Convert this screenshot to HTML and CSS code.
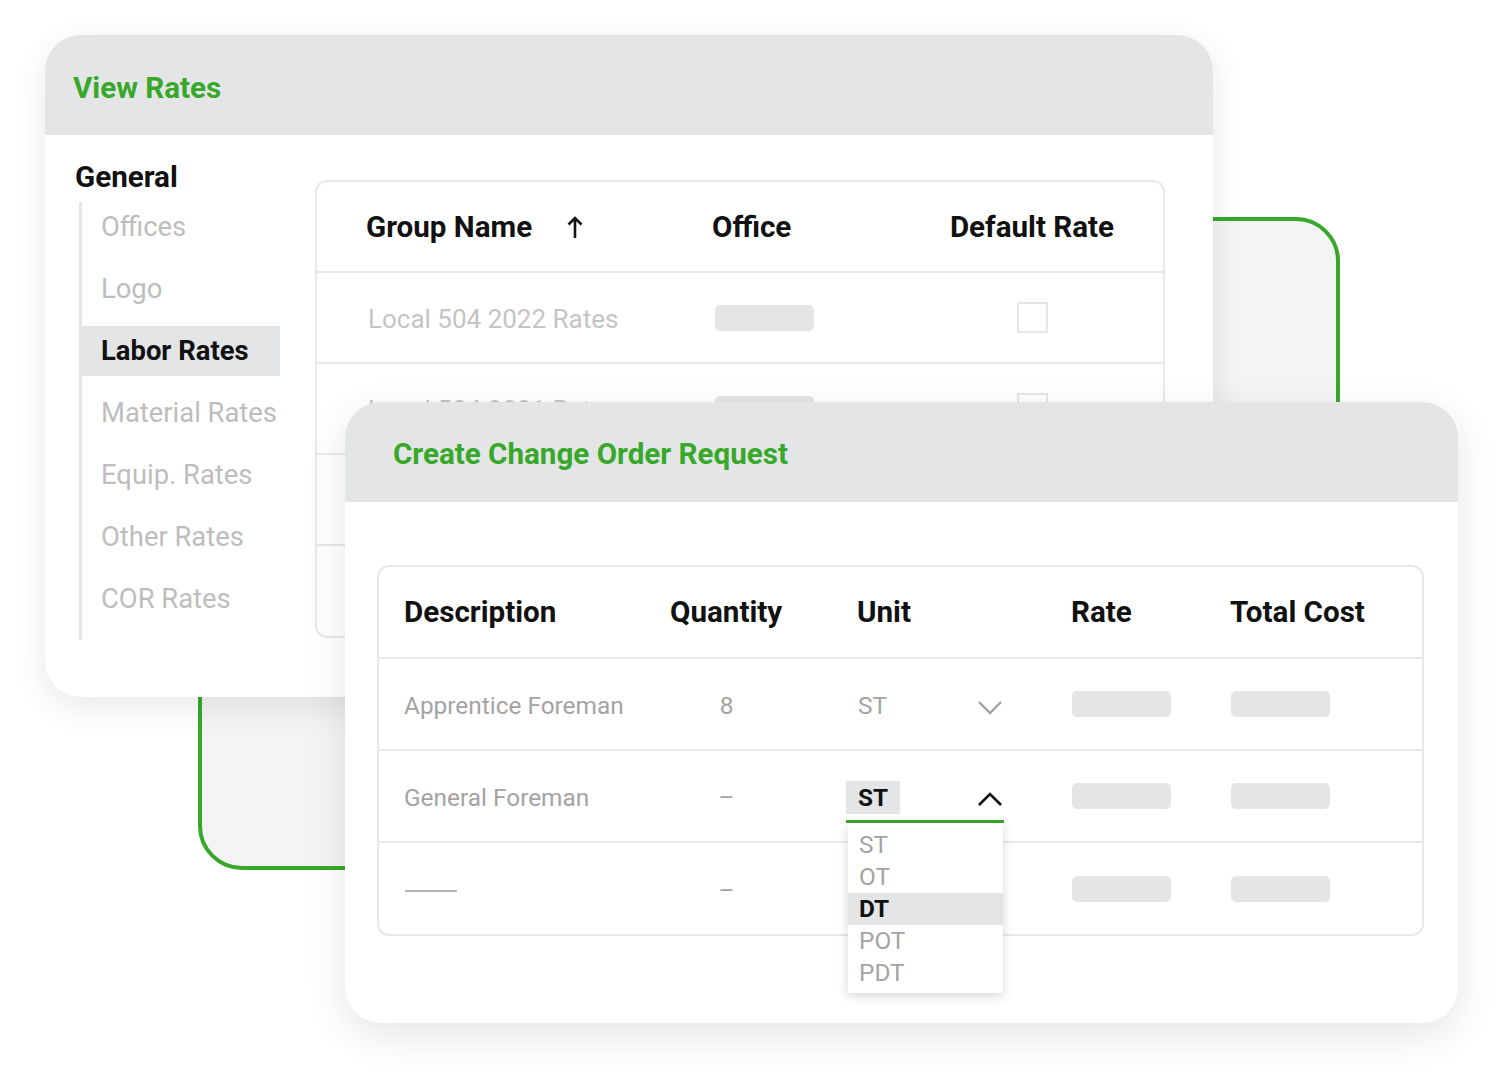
FILE: index.html
```html
<!DOCTYPE html>
<html>
<head>
<meta charset="utf-8">
<link rel="stylesheet" href="styles.css">
</head>
<body>
<div class="stage">
  <div class="connector"></div>

  <section class="card card-rates">
    <header class="card-head"><h1 class="card-title">View Rates</h1></header>
    <div class="rates-body">
      <nav class="sidebar">
        <h2 class="side-title">General</h2>
        <ul class="side-list">
          <li class="side-item">Offices</li>
          <li class="side-item">Logo</li>
          <li class="side-item active">Labor Rates</li>
          <li class="side-item">Material Rates</li>
          <li class="side-item">Equip. Rates</li>
          <li class="side-item">Other Rates</li>
          <li class="side-item">COR Rates</li>
        </ul>
      </nav>
      <div class="rtable">
        <div class="rrow rhead">
          <div class="rcell">Group Name
            <svg class="sort-arrow" viewBox="0 0 16 24" width="16" height="24"><path d="M8 23V3M1.5 9.5L8 3l6.5 6.5" fill="none" stroke="#111" stroke-width="2.6"/></svg>
          </div>
          <div class="rcell">Office</div>
          <div class="rcell center">Default Rate</div>
        </div>
        <div class="rrow">
          <div class="rcell muted">Local 504 2022 Rates</div>
          <div class="rcell"><span class="bar bar-office"></span></div>
          <div class="rcell center"><span class="check"></span></div>
        </div>
        <div class="rrow">
          <div class="rcell muted">Local 504 2021 Rates</div>
          <div class="rcell"><span class="bar bar-office"></span></div>
          <div class="rcell center"><span class="check"></span></div>
        </div>
        <div class="rrow">
          <div class="rcell"></div>
          <div class="rcell"><span class="bar bar-office"></span></div>
          <div class="rcell center"><span class="check"></span></div>
        </div>
        <div class="rrow last">
          <div class="rcell"></div>
          <div class="rcell"><span class="bar bar-office"></span></div>
          <div class="rcell center"><span class="check"></span></div>
        </div>
      </div>
    </div>
  </section>

  <section class="card card-cor">
    <header class="card-head cor-head"><h1 class="card-title">Create Change Order Request</h1></header>
    <div class="cor-body">
      <div class="ctable">
        <div class="crow chead">
          <div class="ccell">Description</div>
          <div class="ccell"><span class="qty">Quantity</span></div>
          <div class="ccell">Unit</div>
          <div class="ccell">Rate</div>
          <div class="ccell">Total Cost</div>
        </div>
        <div class="crow">
          <div class="ccell grey">Apprentice Foreman</div>
          <div class="ccell grey"><span class="qty">8</span></div>
          <div class="ccell">
            <div class="select">
              <span class="sel-label">ST</span>
              <svg class="chev" viewBox="0 0 26 15" width="26" height="15"><path d="M2 2l11 11L24 2" fill="none" stroke="#a2a2a2" stroke-width="2.4"/></svg>
            </div>
          </div>
          <div class="ccell"><span class="bar"></span></div>
          <div class="ccell"><span class="bar"></span></div>
        </div>
        <div class="crow">
          <div class="ccell grey">General Foreman</div>
          <div class="ccell grey"><span class="qty">–</span></div>
          <div class="ccell">
            <div class="select open">
              <span class="sel-label">ST</span>
              <svg class="chev" viewBox="0 0 26 15" width="26" height="15"><path d="M2 13L13 2l11 11" fill="none" stroke="#111" stroke-width="2.6"/></svg>
              <span class="sel-line"></span>
              <ul class="dropdown">
                <li class="opt">ST</li>
                <li class="opt">OT</li>
                <li class="opt active">DT</li>
                <li class="opt">POT</li>
                <li class="opt">PDT</li>
              </ul>
            </div>
          </div>
          <div class="ccell"><span class="bar"></span></div>
          <div class="ccell"><span class="bar"></span></div>
        </div>
        <div class="crow last">
          <div class="ccell"><span class="blank-line"></span></div>
          <div class="ccell grey"><span class="qty">–</span></div>
          <div class="ccell"></div>
          <div class="ccell"><span class="bar"></span></div>
          <div class="ccell"><span class="bar"></span></div>
        </div>
      </div>
    </div>
  </section>
</div>
</body>
</html>
```

FILE: styles.css
```css
* { box-sizing: border-box; }
html, body { margin: 0; padding: 0; background: #fff; }
body {
  font-family: Roboto, "Noto Sans", "Liberation Sans", sans-serif;
  color: #111;
  overflow: hidden;
}
ul { list-style: none; margin: 0; padding: 0; }
h1, h2 { margin: 0; }

.stage {
  position: relative;
  width: 1500px;
  height: 1076px;
}

.connector {
  position: absolute;
  left: 198px;
  top: 217px;
  width: 1142px;
  height: 653px;
  border: 4px solid #37a829;
  border-radius: 44px;
  background: #f4f4f4;
}

.card {
  position: absolute;
  background: #fff;
  border-radius: 36px;
  overflow: hidden;
  box-shadow: 0 10px 34px rgba(0, 0, 0, 0.09);
}
.card-rates { left: 45px; top: 35px; width: 1168px; height: 662px; }
.card-cor { left: 345px; top: 402px; width: 1113px; height: 621px; overflow: visible; box-shadow: 0 12px 40px rgba(0,0,0,0.10); }

.card-head {
  height: 100px;
  background: #e4e5e7;
  display: flex;
  align-items: center;
  padding-left: 28px;
}
.card-cor .card-head { border-radius: 36px 36px 0 0; padding-left: 48px; }
.card-title {
  font-size: 29.6px;
  font-weight: 700;
  color: #37a829;
  padding-top: 5px;
}
.card-cor .card-title { padding-top: 4px; }

/* ---- View Rates ---- */
.rates-body {
  display: flex;
  align-items: flex-start;
  padding: 0 48px 0 30px;
}
.sidebar {
  width: 240px;
  padding-top: 26px;
}
.side-title {
  font-size: 29.6px;
  font-weight: 700;
  line-height: 32px;
  color: #111;
}
.side-list {
  margin-top: 9px;
  margin-left: 4px;
  border-left: 3px solid #e6e6e6;
  padding-bottom: 16px;
  display: flex;
  flex-direction: column;
  gap: 12px;
}
.side-item {
  height: 50px;
  width: 198px;
  display: flex;
  align-items: center;
  padding-left: 19px;
  font-size: 27.4px;
  color: #bdbdbd;
  white-space: nowrap;
}
.side-item.active {
  background: #e4e5e7;
  color: #111;
  font-weight: 700;
}

.rtable {
  margin-top: 45px;
  width: 850px;
  height: 458px;
  border: 2px solid #e8e8e8;
  border-radius: 12px;
  overflow: hidden;
}
.rrow {
  display: grid;
  grid-template-columns: 346px 189px 1fr;
  padding-left: 49px;
  height: 91px;
  border-bottom: 2px solid #e8e8e8;
  align-items: center;
}
.rrow.last { border-bottom: none; }
.rhead .rcell {
  font-size: 29.6px;
  font-weight: 700;
  color: #111;
}
.rcell {
  display: flex;
  align-items: center;
  white-space: nowrap;
}
.rcell.center { justify-content: center; }
.rcell.muted {
  font-size: 26px;
  color: #c4c4c4;
  padding-left: 2px;
  padding-top: 2px;
}
.sort-arrow { margin-left: 35px; }
.bar {
  display: block;
  width: 99px;
  height: 26px;
  border-radius: 5px;
  background: #e4e5e7;
}
.bar-office { margin-left: 3px; margin-top: 0; }
.check {
  display: block;
  width: 31px;
  height: 31px;
  border: 2px solid #e6e6e6;
  margin-left: 1px;
}

/* ---- Change order ---- */
.cor-body { padding: 63px 34px 0 32px; }
.ctable {
  width: 1047px;
  border: 2px solid #e8e8e8;
  border-radius: 12px;
}
.crow {
  display: grid;
  grid-template-columns: 266px 187px 214px 159px 1fr;
  padding-left: 25px;
  height: 92px;
  border-bottom: 2px solid #e8e8e8;
  align-items: center;
}
.crow.chead { height: 92px; padding-top: 0; }
.crow.last { border-bottom: none; height: 91px; }
.chead .ccell {
  font-size: 29.6px;
  font-weight: 700;
  color: #111;
}
.ccell {
  display: flex;
  align-items: center;
  white-space: nowrap;
  font-size: 24.4px;
}
.ccell.grey { color: #a3a3a3; padding-top: 3px; }
.qty { display: block; width: 113px; text-align: center; }
.chead .qty { text-align: left; }
.ccell .bar { margin-left: 1px; }
.blank-line {
  display: block;
  width: 52px;
  height: 2px;
  background: #b5b5b5;
  margin-left: 1px;
  margin-top: 4px;
}

.select {
  position: relative;
  width: 158px;
  height: 33px;
  margin-left: -11px;
  margin-top: 3px;
  display: flex;
  align-items: center;
  justify-content: space-between;
  padding-right: 1px;
}
.sel-label {
  height: 33px;
  line-height: 33px;
  padding: 0 12px;
  font-size: 24.4px;
  color: #a3a3a3;
}
.select .chev { margin-top: 4px; }
.select.open { margin-top: 2px; }
.select.open .sel-label {
  background: #e4e5e7;
  color: #111;
  font-weight: 700;
}
.select.open .chev { margin-top: 4px; }
.sel-line {
  position: absolute;
  left: 0;
  right: 0;
  top: 39px;
  height: 3px;
  background: #37a829;
}
.dropdown {
  position: absolute;
  z-index: 5;
  left: 2px;
  top: 42px;
  width: 155px;
  height: 170px;
  background: #fff;
  box-shadow: 0 3px 10px rgba(0, 0, 0, 0.16);
  padding-top: 6px;
}
.opt {
  height: 32px;
  line-height: 32px;
  padding-left: 11px;
  font-size: 24.4px;
  color: #a3a3a3;
}
.opt.active {
  background: #e4e5e7;
  color: #111;
  font-weight: 700;
}
```
